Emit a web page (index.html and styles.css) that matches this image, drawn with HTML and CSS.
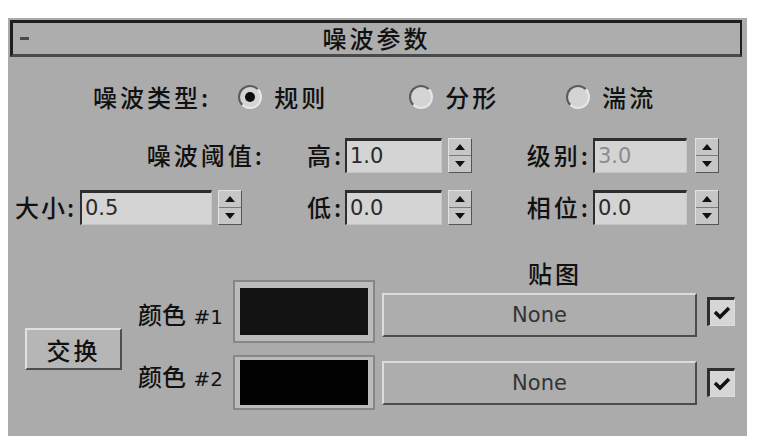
FILE: index.html
```html
<!DOCTYPE html>
<html lang="zh-CN">
<head>
    <meta charset="UTF-8">
    <meta name="viewport" content="width=device-width, initial-scale=1.0">
    <title>噪波参数</title>
    <link rel="stylesheet" href="styles.css">
</head>
<body>
    <div class="panel">
        <div class="title-bar">
            <span class="collapse"></span>
            <span class="title">噪波参数</span>
            <span></span>
        </div>

        <div class="type-row">
            <span class="type-label">噪波类型:</span>
            <label class="opt opt-1"><span class="radio checked"></span>规则</label>
            <label class="opt opt-2"><span class="radio"></span>分形</label>
            <label class="opt"><span class="radio"></span>湍流</label>
        </div>

        <div class="fields">
            <div class="cell cell-a cell-end">
                <span class="threshold">噪波阈值:</span>
            </div>
            <div class="cell cell-b">
                <span class="lbl lbl-b">高:</span>
                <span class="input input-b">1.0</span>
                <span class="spin"><i class="up"></i><i class="down"></i></span>
            </div>
            <div class="cell cell-c">
                <span class="lbl lbl-c">级别:</span>
                <span class="input input-c disabled">3.0</span>
                <span class="spin spin-c"><i class="up"></i><i class="down"></i></span>
            </div>

            <div class="cell cell-a">
                <span class="lbl lbl-a">大小:</span>
                <span class="input input-a">0.5</span>
                <span class="spin"><i class="up"></i><i class="down"></i></span>
            </div>
            <div class="cell cell-b">
                <span class="lbl lbl-b">低:</span>
                <span class="input input-b">0.0</span>
                <span class="spin"><i class="up"></i><i class="down"></i></span>
            </div>
            <div class="cell cell-c">
                <span class="lbl lbl-c">相位:</span>
                <span class="input input-c">0.0</span>
                <span class="spin spin-c"><i class="up"></i><i class="down"></i></span>
            </div>
        </div>

        <div class="bottom">
            <button class="swap">交换</button>
            <div class="colors">
                <span class="map-head">贴图</span>

                <span class="color-lbl">颜色 <em>#1</em></span>
                <span class="swatch swatch-1"><span class="fill fill-1"></span></span>
                <button class="map map-1">None</button>
                <span class="check">
                    <svg width="20" height="20" viewBox="0 0 20 20"><polyline points="3,9 8,14 17,5" fill="none" stroke="#111" stroke-width="3.5"/></svg>
                </span>

                <span class="color-lbl color-lbl-2">颜色 <em>#2</em></span>
                <span class="swatch swatch-2"><span class="fill fill-2"></span></span>
                <button class="map">None</button>
                <span class="check">
                    <svg width="20" height="20" viewBox="0 0 20 20"><polyline points="3,9 8,14 17,5" fill="none" stroke="#111" stroke-width="3.5"/></svg>
                </span>
            </div>
        </div>
    </div>
</body>
</html>
```

FILE: styles.css
```css
body {
    margin: 8px;
    background-color: #fff;
    font-family: "Noto Sans CJK SC", sans-serif;
    font-size: 24px;
    font-weight: 500;
    letter-spacing: 3px;
    line-height: 1.2;
    color: #111;
}

.panel {
    margin-top: 10px;
    width: 739px;
    height: 418px;
    box-sizing: border-box;
    padding: 2px 5px 0 2px;
    background-color: #ababab;
}

/* barra de titulo */
.title-bar {
    height: 37px;
    box-sizing: border-box;
    border: 3px solid #1e1e1e;
    border-right-width: 2px;
    border-bottom-color: #4a4a4a;
    display: grid;
    grid-template-columns: 1fr auto 1fr;
    align-items: center;
    background-color: #adadad;
}

.collapse {
    width: 9px;
    height: 3px;
    margin-left: 7px;
    background-color: #4a4a4a;
}

/* tipo de ruido */
.type-row {
    display: flex;
    align-items: center;
    height: 40px;
    margin-top: 20px;
    padding-left: 83px;
}

.type-label {
    margin-right: 27px;
}

.opt {
    display: flex;
    align-items: center;
    gap: 12px;
}

.opt-1 {
    width: 171px;
}

.opt-2 {
    width: 157px;
}

.radio {
    position: relative;
    width: 24px;
    height: 24px;
    box-sizing: border-box;
    border-radius: 50%;
    border: 2px solid;
    border-color: #5a5a5a #e6e6e6 #e6e6e6 #5a5a5a;
    background-color: #d4d4d4;
}

.radio.checked::after {
    content: "";
    position: absolute;
    left: 5px;
    top: 5px;
    width: 10px;
    height: 10px;
    border-radius: 50%;
    background-color: #0c0c0c;
}

/* campos numericos */
.fields {
    display: grid;
    grid-template-columns: 288px 218px 1fr;
    grid-auto-rows: 35px;
    row-gap: 17px;
    margin-top: 21px;
}

.cell {
    display: flex;
    align-items: center;
}

.cell-a {
    padding-left: 5px;
}

.cell-end {
    justify-content: flex-end;
    padding-right: 33px;
}

.cell-b,
.cell-c {
    padding-left: 9px;
}

.lbl {
    flex-shrink: 0;
    white-space: nowrap;
}

.lbl-a {
    width: 63px;
    letter-spacing: 2px;
}

.lbl-b {
    width: 36px;
    text-align: right;
}

.lbl-c {
    width: 66px;
    text-align: right;
}

.input {
    height: 35px;
    box-sizing: border-box;
    margin-left: 2px;
    padding-left: 3px;
    border-top: 3px solid #2e2e2e;
    border-left: 2px solid #2e2e2e;
    border-right: 1px solid #c8c8c8;
    border-bottom: 1px solid #c4c4c4;
    background-color: #d4d4d4;
    font-family: "DejaVu Sans", sans-serif;
    font-size: 21px;
    font-weight: normal;
    letter-spacing: 0;
    line-height: 30px;
    color: #2a2a2a;
}

.input-a {
    width: 132px;
}

.input-b {
    width: 97px;
}

.input-c {
    width: 94px;
}

.input.disabled {
    color: #8c8c8c;
}

.spin {
    width: 24px;
    height: 35px;
    box-sizing: border-box;
    margin-left: 6px;
    display: flex;
    flex-direction: column;
    border: 1px solid;
    border-color: #e2e2e2 #555 #555 #e2e2e2;
    background-color: #c6c6c6;
}

.spin-c {
    margin-left: 8px;
}

.spin i {
    flex: 1;
    display: flex;
    align-items: center;
    justify-content: center;
}

.spin i::before {
    content: "";
    border-left: 5px solid transparent;
    border-right: 5px solid transparent;
}

.spin .up::before {
    border-bottom: 6px solid #111;
}

.spin .down {
    border-top: 1px solid #7a7a7a;
}

.spin .down::before {
    border-top: 6px solid #111;
}

/* colores y mapas */
.bottom {
    display: flex;
    margin-top: 35px;
}

.swap {
    align-self: flex-end;
    margin: 0 0 40px 15px;
    width: 97px;
    height: 42px;
    padding: 0;
    border: 2px solid;
    border-color: #e0e0e0 #4e4e4e #4e4e4e #e0e0e0;
    background-color: #b6b6b6;
    font-family: inherit;
    font-size: 24px;
    font-weight: 500;
    letter-spacing: 3px;
    color: #111;
}

.colors {
    margin-left: 16px;
    display: grid;
    grid-template-columns: 95px 142px 322px 38px;
    grid-template-rows: auto 63px 55px;
    row-gap: 12px;
    align-items: center;
}

.map-head {
    grid-column: 3 / 5;
    justify-self: center;
    line-height: 26px;
    margin-bottom: -18px;
    align-self: start;
}

.color-lbl {
    white-space: nowrap;
    letter-spacing: 0;
    margin-top: 6px;
}

.color-lbl-2 {
    margin-top: 0;
    margin-bottom: 12px;
}

.color-lbl em {
    font-style: normal;
    font-family: "DejaVu Sans", sans-serif;
    font-size: 20px;
    font-weight: normal;
    margin-left: 2px;
}

.swatch {
    display: flex;
    box-sizing: border-box;
    border: 2px solid #878787;
    background-color: #bcbcbc;
    align-self: stretch;
}

.swatch-1 {
    padding: 6px 5px;
}

.swatch-2 {
    padding: 3px 5px;
}

.fill {
    flex: 1;
}

.fill-1 {
    background-color: #131313;
}

.fill-2 {
    background-color: #020202;
}

.map {
    margin-left: 7px;
    width: 315px;
    height: 44px;
    padding: 0;
    border: 2px solid;
    border-color: #dcdcdc #4c4c4c #4c4c4c #dcdcdc;
    background-color: #adadad;
    font-family: "DejaVu Sans", sans-serif;
    font-size: 21px;
    color: #333;
}

.map-1 {
    margin-top: 6px;
}

.check {
    margin-left: 10px;
    width: 28px;
    height: 29px;
    box-sizing: border-box;
    display: flex;
    align-items: center;
    justify-content: center;
    border-top: 3px solid #2e2e2e;
    border-left: 3px solid #2e2e2e;
    border-right: 1px solid #dcdcdc;
    border-bottom: 1px solid #dcdcdc;
    background-color: #d6d6d6;
}
```
